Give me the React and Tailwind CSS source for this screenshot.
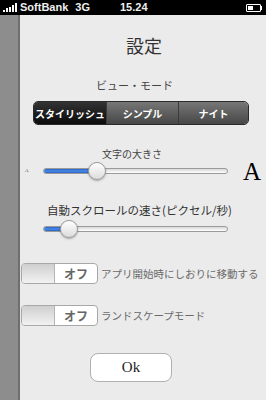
import React from "react";

const jp = { fontFamily: '"Noto Sans CJK JP", "Liberation Sans", sans-serif' };

function StatusBar() {
  return (
    <div className="h-[15px] bg-black text-[#eee] flex items-center text-[11px] leading-none font-semibold" style={{ fontFamily: '"Liberation Sans", sans-serif' }}>
      <div className="flex items-end gap-[1px] ml-[3px] mr-[2px] h-[9px]">
        <div className="w-[2px] h-[2px] bg-white" />
        <div className="w-[2px] h-[4px] bg-white" />
        <div className="w-[2px] h-[5px] bg-white" />
        <div className="w-[2px] h-[7px] bg-white" />
        <div className="w-[2px] h-[9px] bg-white" />
      </div>
      <span className="ml-[1px]">SoftBank</span>
      <span className="ml-[7px]">3G</span>
      <span className="ml-[30px]">15.24</span>
      <div className="ml-auto mr-[4px] flex items-center">
        <div className="w-[15px] h-[8px] border border-white rounded-[1px] p-[1px]">
          <div className="w-[5px] h-full bg-white" />
        </div>
        <div className="w-[1px] h-[4px] bg-white" />
      </div>
    </div>
  );
}

function Slider({ pct }) {
  return (
    <div className="relative w-[185px] h-[20px] flex items-center">
      <div className="w-full h-[6px] rounded-full border border-[#9a9a9a] bg-gradient-to-b from-[#d8d8d8] to-[#ffffff] overflow-hidden">
        <div className="h-full bg-gradient-to-b from-[#2a62c4] via-[#4a8ce6] to-[#2a62c4]" style={{ width: pct + "%" }} />
      </div>
      <div
        className="absolute top-[1px] w-[18px] h-[18px] rounded-full border border-[#9a9a9a] bg-gradient-to-b from-[#ffffff] to-[#dcdcdc] shadow-[0_1px_2px_rgba(0,0,0,0.3)]"
        style={{ left: `calc(${pct}% - 9px)` }}
      />
    </div>
  );
}

function Toggle({ label }) {
  return (
    <div className="flex items-center">
      <div className="flex w-[77px] h-[21px] rounded-[4px] border border-[#a8a8a8] overflow-hidden bg-white">
        <div className="w-[33px] h-full bg-gradient-to-b from-[#cfcfcf] to-[#f2f2f2] border-r border-[#b5b5b5]" />
        <div className="flex-1 flex items-center justify-center text-[12px] font-bold text-[#666]" style={jp}>
          オフ
        </div>
      </div>
      <span className="ml-[3px] text-[10.5px] text-[#6a6a6a] whitespace-nowrap" style={jp}>
        {label}
      </span>
    </div>
  );
}

export default function App() {
  return (
    <div className="w-[266px] h-[400px] overflow-hidden bg-[#ebebeb]">
      <StatusBar />
      <div className="flex h-[385px]">
        <div className="w-[20px] bg-[#8d8d8d] border-r-2 border-[#6f6f6f]" />
        <div className="flex-1 flex flex-col text-[#333]" style={jp}>
          <div className="mt-[20px] text-[18px] leading-[20px] text-center pl-[2px]">設定</div>
          <div className="mt-[23px] pl-[76px] text-[11px] leading-[14px] text-[#444]">ビュー・モード</div>
          <div className="mt-[9px] ml-[13px] w-[216px] h-[24px] flex rounded-[5px] border border-[#2a2a2a] overflow-hidden text-[10px] font-bold text-white">
            <div className="w-[72px] flex items-center justify-center bg-gradient-to-b from-[#333] to-[#0c0c0c]">スタイリッシュ</div>
            <div className="w-[72px] flex items-center justify-center bg-gradient-to-b from-[#777] to-[#474747] border-l border-[#3a3a3a]">シンプル</div>
            <div className="flex-1 flex items-center justify-center bg-gradient-to-b from-[#777] to-[#474747] border-l border-[#3a3a3a]">ナイト</div>
          </div>
          <div className="mt-[22px] pl-[82px] text-[10px] leading-[14px] text-[#444]">文字の大きさ</div>
          <div className="flex items-center h-[20px]">
            <span className="ml-[5px] w-[18px] text-[5px] text-[#444]" style={{ fontFamily: '"Liberation Serif", serif' }}>A</span>
            <Slider pct={29} />
            <span className="ml-[15px] text-[25px] leading-none text-black" style={{ fontFamily: '"Liberation Serif", serif' }}>A</span>
          </div>
          <div className="mt-[22px] pl-[27px] text-[11.5px] leading-[14px] text-[#333] whitespace-nowrap">自動スクロールの速さ(ピクセル/秒)</div>
          <div className="mt-[2px] ml-[23px] h-[20px]">
            <Slider pct={14} />
          </div>
          <div className="mt-[24px] ml-[1px]">
            <Toggle label="アプリ開始時にしおりに移動する" />
          </div>
          <div className="mt-[21px] ml-[1px]">
            <Toggle label="ランドスケープモード" />
          </div>
          <div className="mt-[27px] ml-[70px] w-[82px] h-[29px] rounded-[8px] border border-[#b0b0b0] bg-white flex items-center justify-center text-[15px] text-[#222]" style={{ fontFamily: '"Liberation Serif", serif' }}>
            Ok
          </div>
        </div>
      </div>
    </div>
  );
}
